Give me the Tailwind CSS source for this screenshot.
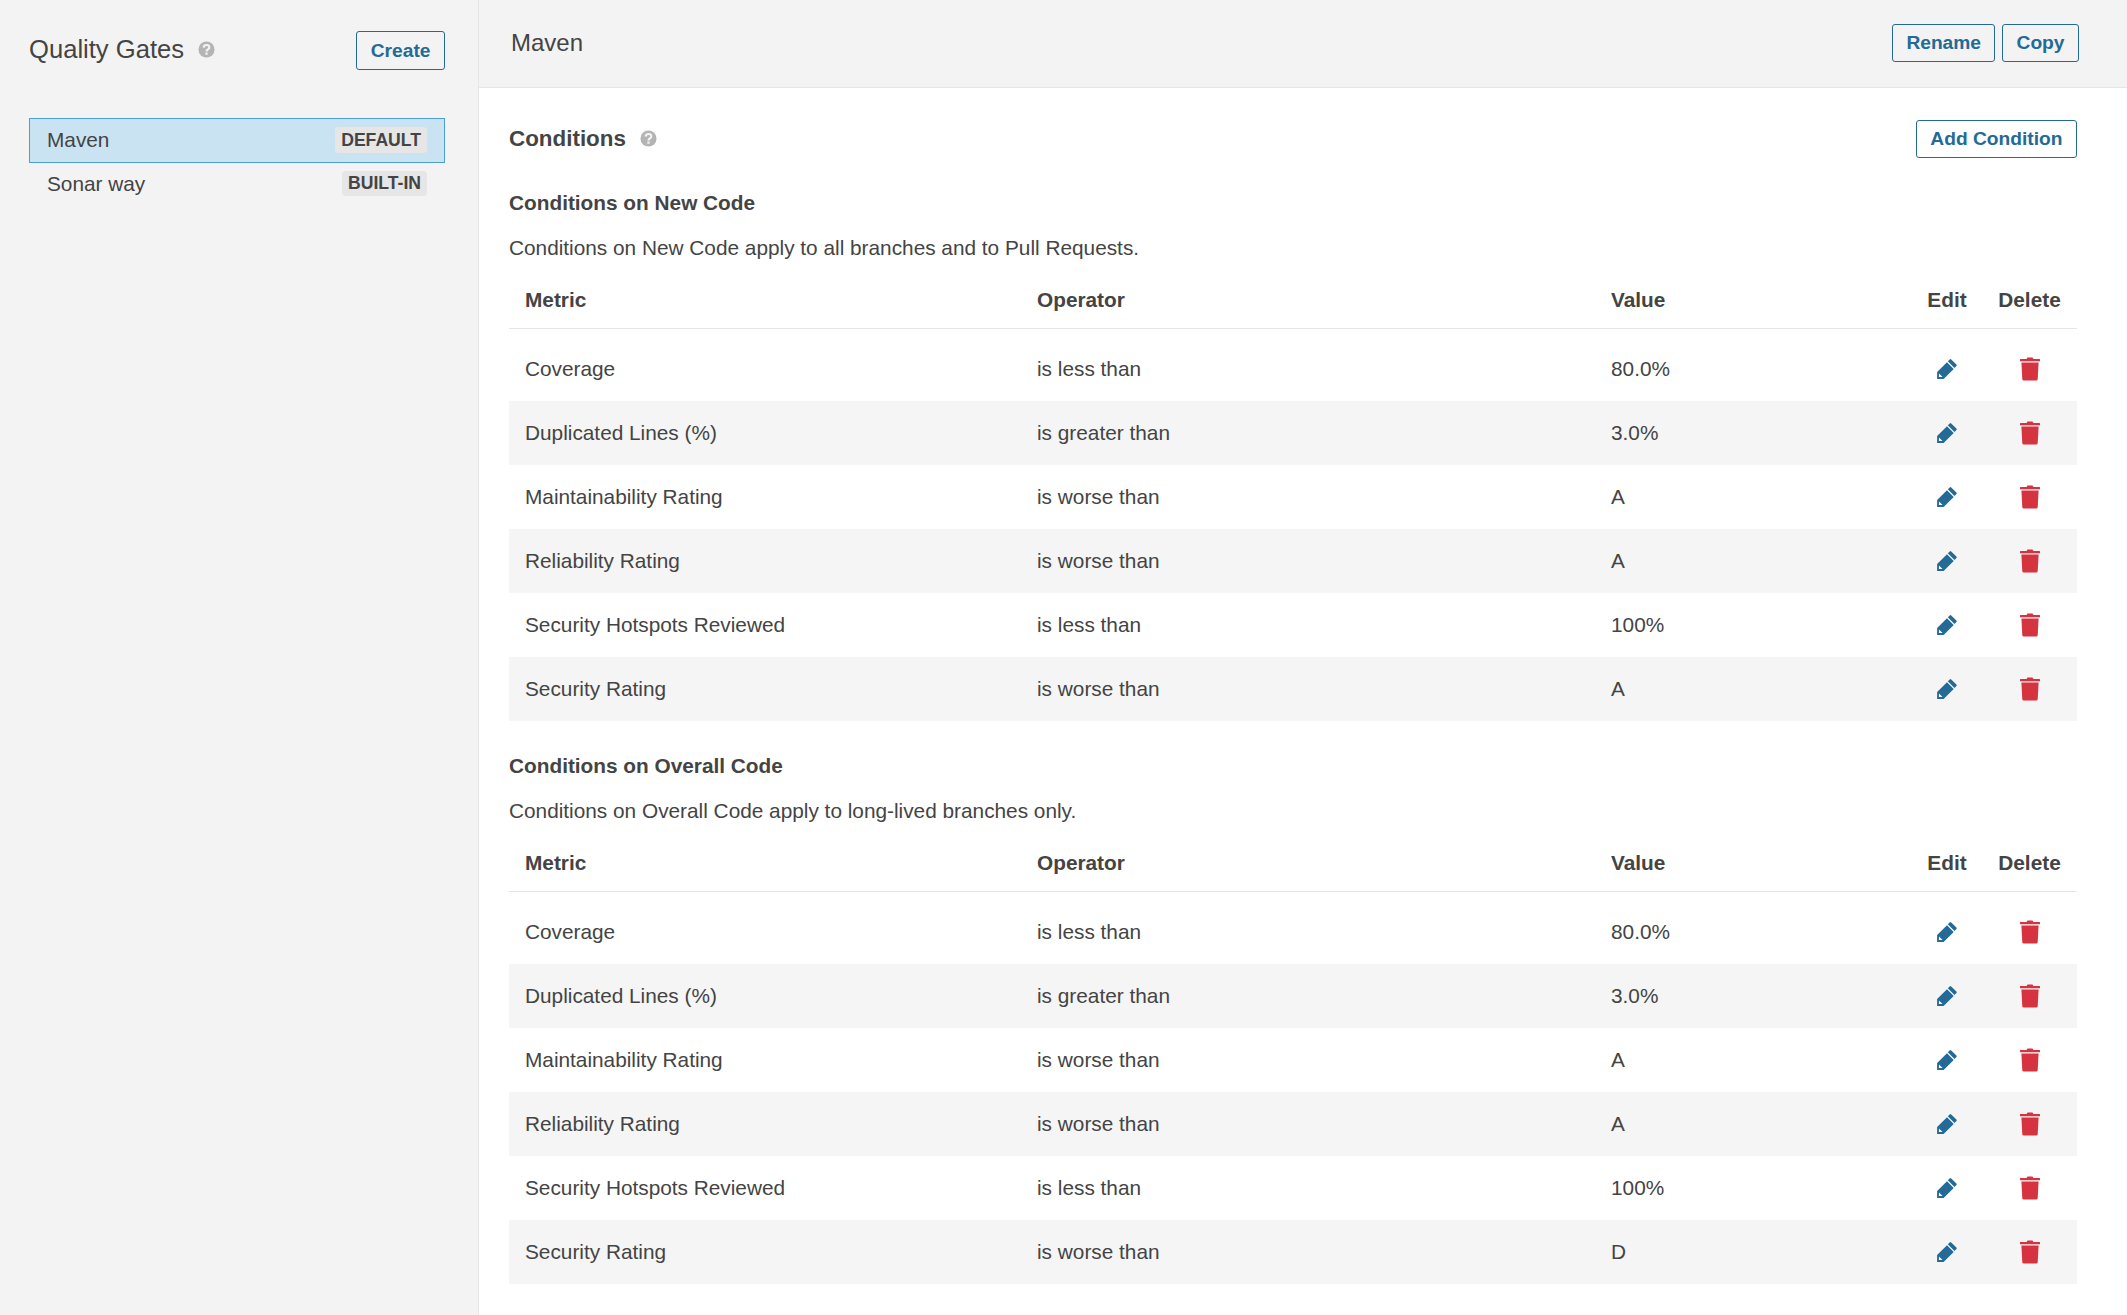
<!DOCTYPE html>
<html><head><meta charset="utf-8"><title>Quality Gates</title>
<script src="https://cdn.jsdelivr.net/npm/@tailwindcss/browser@4"></script></head>
<body class="font-['Liberation_Sans',Arial,sans-serif] text-[20.8px] text-[#444] bg-white">
<svg class="hidden"><defs>
<symbol id="pen" viewBox="0 0 20 20"><path fill="#236a97" d="M14.2 0.4 19.400 5.600a1.100 1.100 0 0 1 0 1.500L17.500 9 10.800 2.300 12.700 0.400a1.100 1.100 0 0 1 1.500 0ZM10 3.200 16.700 9.900 6.600 19.900 0.100 19.900 0.100 13.100ZM2 14.400 1.900 18.100 5.600 18.100Z" fill-rule="evenodd"/></symbol>
<symbol id="bin" viewBox="0 0 20 24"><path fill="#d4333f" d="M7.500 0.400h5l1 1.700H19.500a.5.5 0 0 1 .5.5V4.300H0V2.600a.5.5 0 0 1 .5-.5H6.500ZM1.400 5.600H18.600L17.700 22.200a1.600 1.600 0 0 1-1.600 1.400H3.900A1.600 1.600 0 0 1 2.300 22.200Z"/></symbol>
<symbol id="help" viewBox="0 0 18 18"><circle cx="9" cy="9" r="8.500" fill="#b4b4b4"/><path fill="none" stroke="#f3f3f3" stroke-width="2.200" d="M5.900 6.900C6.100 5.100 7.400 4.300 9 4.300c1.700 0 3 1 3 2.500 0 2.200-3 2.100-3 4.300"/><rect x="7.800" y="12.200" width="2.400" height="2.300" fill="#f3f3f3"/></symbol>
</defs></svg>
<div class="flex h-[1315px] overflow-hidden">
<aside class="w-[479px] shrink-0 bg-[#f3f3f3] border-r border-[#e6e6e6] pl-[29px] pr-[33px]">
<div class="flex justify-between pt-[31px] h-[118px] items-start">
<div class="flex items-center gap-[14px] h-[38px]"><h1 class="text-[25.6px] font-normal leading-[36px] -mt-[2px]">Quality Gates</h1><svg class="w-[17px] h-[17px] -mt-[1px]"><use href="#help"/></svg></div>
<button class="h-[39px] px-[13.5px] border border-[#236a97] rounded-[3px] text-[#236a97] font-bold text-[19.2px] leading-[37px] bg-transparent">Create</button>
</div>
<div class="flex items-center justify-between h-[45px] bg-[#cae3f2] border border-[#4b9fd5] pl-[17px] pr-[17px] pb-[2px]"><span>Maven</span><span class="bg-[#e6e6e6] rounded-[4px] px-[6px] h-[26px] leading-[26px] text-[17.6px] font-bold">DEFAULT</span></div>
<div class="flex items-center justify-between h-[44px] pl-[18px] pr-[18px] pb-[2px]"><span>Sonar way</span><span class="bg-[#e6e6e6] rounded-[4px] px-[6px] h-[25px] leading-[25px] text-[17.6px] font-bold -mt-[1px]">BUILT-IN</span></div>
</aside>
<main class="flex-1 min-w-0">
<header class="h-[88px] bg-[#f3f3f3] border-b border-[#e6e6e6] flex items-center justify-between pl-[32px] pr-[48px]">
<h2 class="text-[24px] font-normal -mt-[2px]">Maven</h2>
<div class="flex gap-[7px] -mt-[1px]">
<button class="h-[38px] px-[13px] border border-[#236a97] rounded-[3px] text-[#236a97] font-bold text-[19.2px] leading-[36px]">Rename</button>
<button class="h-[38px] px-[13.5px] border border-[#236a97] rounded-[3px] text-[#236a97] font-bold text-[19.2px] leading-[36px]">Copy</button>
</div>
</header>
<section class="pl-[30px] pr-[50px] pt-[32px]">
<div class="flex items-center justify-between h-[38px]">
<div class="flex items-center gap-[14px]"><h3 class="text-[22.4px] font-bold">Conditions</h3><svg class="w-[17px] h-[17px]"><use href="#help"/></svg></div>
<button class="h-[38px] px-[13.5px] border border-[#236a97] rounded-[3px] text-[#236a97] font-bold text-[19.2px] leading-[36px]">Add Condition</button>
</div>

<h4 class="font-bold mt-[31px] leading-[28px]">Conditions on New Code</h4>
<p class="mt-[17px] leading-[28px]">Conditions on New Code apply to all branches and to Pull Requests.</p>
<table class="w-[1568px] table-fixed border-collapse mt-[11px]">
<colgroup><col class="w-[512px]"><col class="w-[574px]"><col class="w-[300px]"><col class="w-[99px]"><col class="w-[83px]"></colgroup>
<thead><tr class="h-[55px] border-b border-[#e6e6e6] text-left">
<th class="pl-[16px] pb-[2px] font-bold">Metric</th><th class="pl-[16px] pb-[2px] font-bold">Operator</th><th class="pl-[16px] pb-[2px] font-bold">Value</th><th class="font-bold text-center pl-[5px] pb-[2px]">Edit</th><th class="font-bold text-center pr-[12px] pb-[2px]">Delete</th></tr></thead>
<tbody>
<tr class="h-[73px]"><td class="pl-[16px] pt-[8px]">Coverage</td><td class="pl-[16px] pt-[8px]">is less than</td><td class="pl-[16px] pt-[8px]">80.0%</td><td class="pt-[8px] pl-[5px]"><svg class="w-[20px] h-[20px] mx-auto"><use href="#pen"/></svg></td><td class="pt-[8px] pr-[12px]"><svg class="w-[20px] h-[24px] mx-auto"><use href="#bin"/></svg></td></tr>
<tr class="h-[64px] bg-[#f5f5f5]"><td class="pl-[16px]">Duplicated Lines (%)</td><td class="pl-[16px]">is greater than</td><td class="pl-[16px]">3.0%</td><td class="pl-[5px]"><svg class="w-[20px] h-[20px] mx-auto"><use href="#pen"/></svg></td><td class="pr-[12px]"><svg class="w-[20px] h-[24px] mx-auto"><use href="#bin"/></svg></td></tr>
<tr class="h-[64px]"><td class="pl-[16px]">Maintainability Rating</td><td class="pl-[16px]">is worse than</td><td class="pl-[16px]">A</td><td class="pl-[5px]"><svg class="w-[20px] h-[20px] mx-auto"><use href="#pen"/></svg></td><td class="pr-[12px]"><svg class="w-[20px] h-[24px] mx-auto"><use href="#bin"/></svg></td></tr>
<tr class="h-[64px] bg-[#f5f5f5]"><td class="pl-[16px]">Reliability Rating</td><td class="pl-[16px]">is worse than</td><td class="pl-[16px]">A</td><td class="pl-[5px]"><svg class="w-[20px] h-[20px] mx-auto"><use href="#pen"/></svg></td><td class="pr-[12px]"><svg class="w-[20px] h-[24px] mx-auto"><use href="#bin"/></svg></td></tr>
<tr class="h-[64px]"><td class="pl-[16px]">Security Hotspots Reviewed</td><td class="pl-[16px]">is less than</td><td class="pl-[16px]">100%</td><td class="pl-[5px]"><svg class="w-[20px] h-[20px] mx-auto"><use href="#pen"/></svg></td><td class="pr-[12px]"><svg class="w-[20px] h-[24px] mx-auto"><use href="#bin"/></svg></td></tr>
<tr class="h-[64px] bg-[#f5f5f5]"><td class="pl-[16px]">Security Rating</td><td class="pl-[16px]">is worse than</td><td class="pl-[16px]">A</td><td class="pl-[5px]"><svg class="w-[20px] h-[20px] mx-auto"><use href="#pen"/></svg></td><td class="pr-[12px]"><svg class="w-[20px] h-[24px] mx-auto"><use href="#bin"/></svg></td></tr>
</tbody></table>

<h4 class="font-bold mt-[31px] leading-[28px]">Conditions on Overall Code</h4>
<p class="mt-[17px] leading-[28px]">Conditions on Overall Code apply to long-lived branches only.</p>
<table class="w-[1568px] table-fixed border-collapse mt-[11px]">
<colgroup><col class="w-[512px]"><col class="w-[574px]"><col class="w-[300px]"><col class="w-[99px]"><col class="w-[83px]"></colgroup>
<thead><tr class="h-[55px] border-b border-[#e6e6e6] text-left">
<th class="pl-[16px] pb-[2px] font-bold">Metric</th><th class="pl-[16px] pb-[2px] font-bold">Operator</th><th class="pl-[16px] pb-[2px] font-bold">Value</th><th class="font-bold text-center pl-[5px] pb-[2px]">Edit</th><th class="font-bold text-center pr-[12px] pb-[2px]">Delete</th></tr></thead>
<tbody>
<tr class="h-[73px]"><td class="pl-[16px] pt-[8px]">Coverage</td><td class="pl-[16px] pt-[8px]">is less than</td><td class="pl-[16px] pt-[8px]">80.0%</td><td class="pt-[8px] pl-[5px]"><svg class="w-[20px] h-[20px] mx-auto"><use href="#pen"/></svg></td><td class="pt-[8px] pr-[12px]"><svg class="w-[20px] h-[24px] mx-auto"><use href="#bin"/></svg></td></tr>
<tr class="h-[64px] bg-[#f5f5f5]"><td class="pl-[16px]">Duplicated Lines (%)</td><td class="pl-[16px]">is greater than</td><td class="pl-[16px]">3.0%</td><td class="pl-[5px]"><svg class="w-[20px] h-[20px] mx-auto"><use href="#pen"/></svg></td><td class="pr-[12px]"><svg class="w-[20px] h-[24px] mx-auto"><use href="#bin"/></svg></td></tr>
<tr class="h-[64px]"><td class="pl-[16px]">Maintainability Rating</td><td class="pl-[16px]">is worse than</td><td class="pl-[16px]">A</td><td class="pl-[5px]"><svg class="w-[20px] h-[20px] mx-auto"><use href="#pen"/></svg></td><td class="pr-[12px]"><svg class="w-[20px] h-[24px] mx-auto"><use href="#bin"/></svg></td></tr>
<tr class="h-[64px] bg-[#f5f5f5]"><td class="pl-[16px]">Reliability Rating</td><td class="pl-[16px]">is worse than</td><td class="pl-[16px]">A</td><td class="pl-[5px]"><svg class="w-[20px] h-[20px] mx-auto"><use href="#pen"/></svg></td><td class="pr-[12px]"><svg class="w-[20px] h-[24px] mx-auto"><use href="#bin"/></svg></td></tr>
<tr class="h-[64px]"><td class="pl-[16px]">Security Hotspots Reviewed</td><td class="pl-[16px]">is less than</td><td class="pl-[16px]">100%</td><td class="pl-[5px]"><svg class="w-[20px] h-[20px] mx-auto"><use href="#pen"/></svg></td><td class="pr-[12px]"><svg class="w-[20px] h-[24px] mx-auto"><use href="#bin"/></svg></td></tr>
<tr class="h-[64px] bg-[#f5f5f5]"><td class="pl-[16px]">Security Rating</td><td class="pl-[16px]">is worse than</td><td class="pl-[16px]">D</td><td class="pl-[5px]"><svg class="w-[20px] h-[20px] mx-auto"><use href="#pen"/></svg></td><td class="pr-[12px]"><svg class="w-[20px] h-[24px] mx-auto"><use href="#bin"/></svg></td></tr>
</tbody></table>
</section>
</main>
</div>
</body></html>
